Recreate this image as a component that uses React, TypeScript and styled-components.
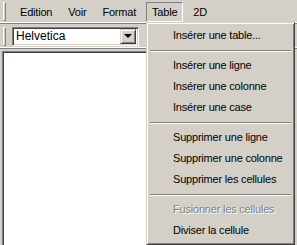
import React from 'react';
import styled, { createGlobalStyle } from 'styled-components';

const GlobalStyle = createGlobalStyle`
  html, body {
    margin: 0;
    padding: 0;
    background: #d4d0c8;
  }
  body {
    font-family: "Liberation Sans", Arial, sans-serif;
  }
`;

const Window = styled.div`
  position: relative;
  width: 297px;
  height: 245px;
  overflow: hidden;
  background: #d4d0c8;
  display: flex;
  flex-direction: column;
  font-family: "Liberation Sans", Arial, sans-serif;
`;

const Band = styled.div<{ $height: number }>`
  height: ${({ $height }) => $height}px;
  display: flex;
  align-items: center;
  padding-left: 3px;
  border-bottom: 1px solid #808080;
  box-shadow: inset 0 -1px 0 #ffffff;
  box-sizing: border-box;
`;

const Grip = styled.div<{ $height: number }>`
  width: 1px;
  height: ${({ $height }) => $height}px;
  border-left: 1px solid #ffffff;
  border-top: 1px solid #ffffff;
  border-right: 1px solid #808080;
  border-bottom: 1px solid #808080;
  background: #d4d0c8;
  flex-shrink: 0;
`;

const MenuItems = styled.div`
  display: flex;
  margin-left: 8px;
  gap: 4px;
  margin-top: 1px;
`;

const MenuTitle = styled.div<{ $open?: boolean }>`
  font-size: 11px;
  letter-spacing: -0.2px;
  color: #000;
  padding: 3px 5px 3px 5px;
  border: 1px solid transparent;
  ${({ $open }) =>
    $open &&
    `
    border-color: #808080 #ffffff #ffffff #808080;
  `}
`;

const Combo = styled.div`
  margin-left: 6px;
  width: 127px;
  height: 19px;
  box-sizing: border-box;
  background: #ffffff;
  border: 1px solid;
  border-color: #808080 #ffffff #ffffff #808080;
  box-shadow: inset 1px 1px 0 #404040, inset -1px -1px 0 #d4d0c8;
  display: flex;
  align-items: center;
  padding: 2px;
`;

const ComboText = styled.span`
  flex: 1;
  font-size: 12px;
  padding-left: 1px;
  color: #000;
`;

const ComboButton = styled.div`
  width: 16px;
  height: 15px;
  box-sizing: border-box;
  background: #d4d0c8;
  border: 1px solid;
  border-color: #d4d0c8 #404040 #404040 #d4d0c8;
  box-shadow: inset 1px 1px 0 #ffffff, inset -1px -1px 0 #808080;
  display: flex;
  align-items: center;
  justify-content: center;
`;

const Arrow = styled.div`
  width: 0;
  height: 0;
  border-left: 4px solid transparent;
  border-right: 4px solid transparent;
  border-top: 4px solid #000;
`;

const Content = styled.div`
  flex: 1;
  margin: 2px 0 0 2px;
  width: 144px;
  background: #ffffff;
  border-top: 1px solid #808080;
  border-left: 1px solid #808080;
  border-right: 1px solid #808080;
  box-shadow: inset 1px 1px 0 #404040;
`;

const Dropdown = styled.div`
  position: absolute;
  left: 146px;
  top: 22px;
  width: 149px;
  height: 223px;
  box-sizing: border-box;
  background: #d4d0c8;
  border: 1px solid;
  border-color: #d4d0c8 #404040 #404040 #d4d0c8;
  box-shadow: inset 1px 1px 0 #ffffff, inset -1px -1px 0 #808080;
  padding: 2px 2px;
  display: flex;
  flex-direction: column;
`;

const Item = styled.div<{ $disabled?: boolean }>`
  height: 21px;
  line-height: 21px;
  padding-left: 24px;
  font-size: 11px;
  letter-spacing: -0.2px;
  white-space: nowrap;
  color: ${({ $disabled }) => ($disabled ? '#808080' : '#000')};
  text-shadow: ${({ $disabled }) => ($disabled ? '1px 1px 0 #ffffff' : 'none')};
`;

const Separator = styled.div`
  height: 9px;
  display: flex;
  flex-direction: column;
  justify-content: center;
  &::before {
    content: '';
    display: block;
    margin: 0 1px;
    border-top: 1px solid #808080;
    border-bottom: 1px solid #ffffff;
  }
`;

type Entry = { label: string; disabled?: boolean } | 'sep';

const entries: Entry[] = [
  { label: 'Insérer une table...' },
  'sep',
  { label: 'Insérer une ligne' },
  { label: 'Insérer une colonne' },
  { label: 'Insérer une case' },
  'sep',
  { label: 'Supprimer une ligne' },
  { label: 'Supprimer une colonne' },
  { label: 'Supprimer les cellules' },
  'sep',
  { label: 'Fusionner les cellules', disabled: true },
  { label: 'Diviser la cellule' },
];

const menus = ['Edition', 'Voir', 'Format', 'Table', '2D'];

const App: React.FC = () => {
  return (
    <Window>
      <GlobalStyle />
      <Band $height={24}>
        <Grip $height={17} />
        <MenuItems>
          {menus.map((m) => (
            <MenuTitle key={m} $open={m === 'Table'}>
              {m}
            </MenuTitle>
          ))}
        </MenuItems>
      </Band>
      <Band $height={25}>
        <Grip $height={17} />
        <Combo>
          <ComboText>Helvetica</ComboText>
          <ComboButton>
            <Arrow />
          </ComboButton>
        </Combo>
      </Band>
      <Content />
      <Dropdown>
        {entries.map((e, i) =>
          e === 'sep' ? (
            <Separator key={i} />
          ) : (
            <Item key={i} $disabled={e.disabled}>
              {e.label}
            </Item>
          )
        )}
      </Dropdown>
    </Window>
  );
};

export default App;
